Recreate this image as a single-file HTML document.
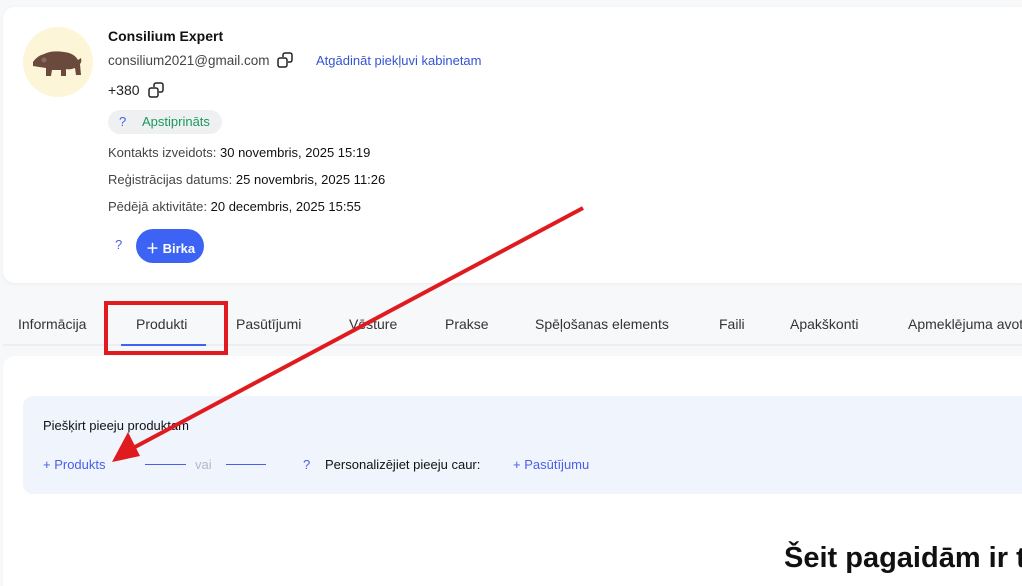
<!DOCTYPE html>
<html><head><meta charset="utf-8"><style>
*{margin:0;padding:0;box-sizing:border-box}
html,body{width:1022px;height:586px;overflow:hidden}
body{background:#f7f8fa;font-family:"Liberation Sans",sans-serif;position:relative;color:#111}
.abs{position:absolute;white-space:nowrap}
.card1{position:absolute;left:3px;top:7px;width:1019px;height:276px;background:#fff;border-radius:12px 0 0 12px;box-shadow:0 1px 4px rgba(0,0,0,.05)}
.card2{position:absolute;left:3px;top:356px;width:1019px;height:230px;background:#fff;border-radius:12px 0 0 0}
.tabs{position:absolute;left:3px;top:344px;width:1019px;height:2px;background:#eceef1}
.tab{position:absolute;top:316px;font-size:14px;color:#333;white-space:nowrap}
.g{color:#444}
.copy{position:absolute;width:16px;height:16px}
</style></head><body>
<div class="card1"></div>
<div class="abs" style="left:23px;top:27px;width:70px;height:70px;border-radius:50%;background:#fdf5d7"></div>
<svg class="abs" style="left:32px;top:48px" width="52" height="30" viewBox="0 0 52 30"><path d="M1 14 Q5 8 12 6 Q20 2 32 4 Q42 5 46 12 L49 10 Q50 14 48 16 L49 27 L44 27 L43 20 Q38 22 34 21 L34 28 L29 28 L29 22 L20 22 L19 28 L14 28 L14 20 Q7 19 1 18 Z" fill="#6b4a3e"/><circle cx="12" cy="12" r="2.5" fill="#8a6a5e"/></svg>
<div class="abs" style="left:108px;top:28px;font-size:14px;font-weight:bold">Consilium Expert</div>
<div class="abs g" style="left:108px;top:53px;font-size:13.5px">consilium2021@gmail.com</div>
<svg class="copy" style="left:277px;top:52px" viewBox="0 0 16 16" fill="none" stroke="#222" stroke-width="1.5"><rect x="1" y="6" width="9" height="9" rx="2"/><path d="M6 5V3a2 2 0 0 1 2-2h5a2 2 0 0 1 2 2v5a2 2 0 0 1-2 2h-2"/></svg>
<div class="abs" style="left:316px;top:53px;font-size:13px;color:#3554d1">Atgādināt piekļuvi kabinetam</div>
<div class="abs" style="left:108px;top:82px;font-size:14px;color:#222">+380</div>
<svg class="copy" style="left:148px;top:82px" viewBox="0 0 16 16" fill="none" stroke="#222" stroke-width="1.5"><rect x="1" y="6" width="9" height="9" rx="2"/><path d="M6 5V3a2 2 0 0 1 2-2h5a2 2 0 0 1 2 2v5a2 2 0 0 1-2 2h-2"/></svg>
<div class="abs" style="left:108px;top:110px;width:114px;height:24px;border-radius:12px;background:#eef0f2"></div>
<div class="abs" style="left:119px;top:114px;font-size:13px;color:#4a5ee8">?</div>
<div class="abs" style="left:142px;top:114px;font-size:13px;color:#1a9a5a">Apstiprināts</div>
<div class="abs g" style="left:108px;top:145px;font-size:13px">Kontakts izveidots: <span style="color:#111">30 novembris, 2025 15:19</span></div>
<div class="abs g" style="left:108px;top:172px;font-size:13px">Reģistrācijas datums: <span style="color:#111">25 novembris, 2025 11:26</span></div>
<div class="abs g" style="left:108px;top:199px;font-size:13px">Pēdējā aktivitāte: <span style="color:#111">20 decembris, 2025 15:55</span></div>
<div class="abs" style="left:115px;top:237px;font-size:13px;color:#4a5ee8">?</div>
<div class="abs" style="left:136px;top:229px;width:68px;height:34px;border-radius:17px;background:#3d63f5;color:#fff;font-size:13px;font-weight:bold;padding:9px 0 0 10px">＋ Birka</div>
<div class="tabs"></div>
<div class="tab" style="left:18px">Informācija</div>
<div class="tab" style="left:136px">Produkti</div>
<div class="abs" style="left:121px;top:344px;width:85px;height:2px;background:#3d63f5"></div>
<div class="tab" style="left:236px">Pasūtījumi</div>
<div class="tab" style="left:349px">Vēsture</div>
<div class="tab" style="left:445px">Prakse</div>
<div class="tab" style="left:535px">Spēļošanas elements</div>
<div class="tab" style="left:719px">Faili</div>
<div class="tab" style="left:790px">Apakškonti</div>
<div class="tab" style="left:908px">Apmeklējuma avots</div>
<div class="card2"></div>
<div class="abs" style="left:23px;top:396px;width:999px;height:98px;border-radius:10px 0 0 10px;background:#eff4fd"></div>
<div class="abs" style="left:43px;top:418px;font-size:13px">Piešķirt pieeju produktam</div>
<div class="abs" style="left:43px;top:457px;font-size:13px;color:#4a5ee8">+ Produkts</div>
<div class="abs" style="left:145px;top:464px;width:41px;height:1px;background:#4a5ee8"></div>
<div class="abs" style="left:195px;top:457px;font-size:13px;color:#b0b8c8">vai</div>
<div class="abs" style="left:226px;top:464px;width:40px;height:1px;background:#4a5ee8"></div>
<div class="abs" style="left:303px;top:457px;font-size:13px;color:#4a5ee8">?</div>
<div class="abs" style="left:325px;top:457px;font-size:13px">Personalizējiet pieeju caur:</div>
<div class="abs" style="left:513px;top:457px;font-size:13px;color:#4a5ee8">+ Pasūtījumu</div>
<div class="abs" style="left:784px;top:542px;font-size:29px;font-weight:bold">Šeit pagaidām ir tukšs</div>
<svg class="abs" style="left:0;top:0" width="1022" height="586"><rect x="106" y="303" width="120" height="50" fill="none" stroke="#e01b1f" stroke-width="4"/><line x1="583" y1="208" x2="135" y2="447" stroke="#e01b1f" stroke-width="4"/><polygon points="112,462 128,432 140,456" fill="#e01b1f"/></svg>
</body></html>
